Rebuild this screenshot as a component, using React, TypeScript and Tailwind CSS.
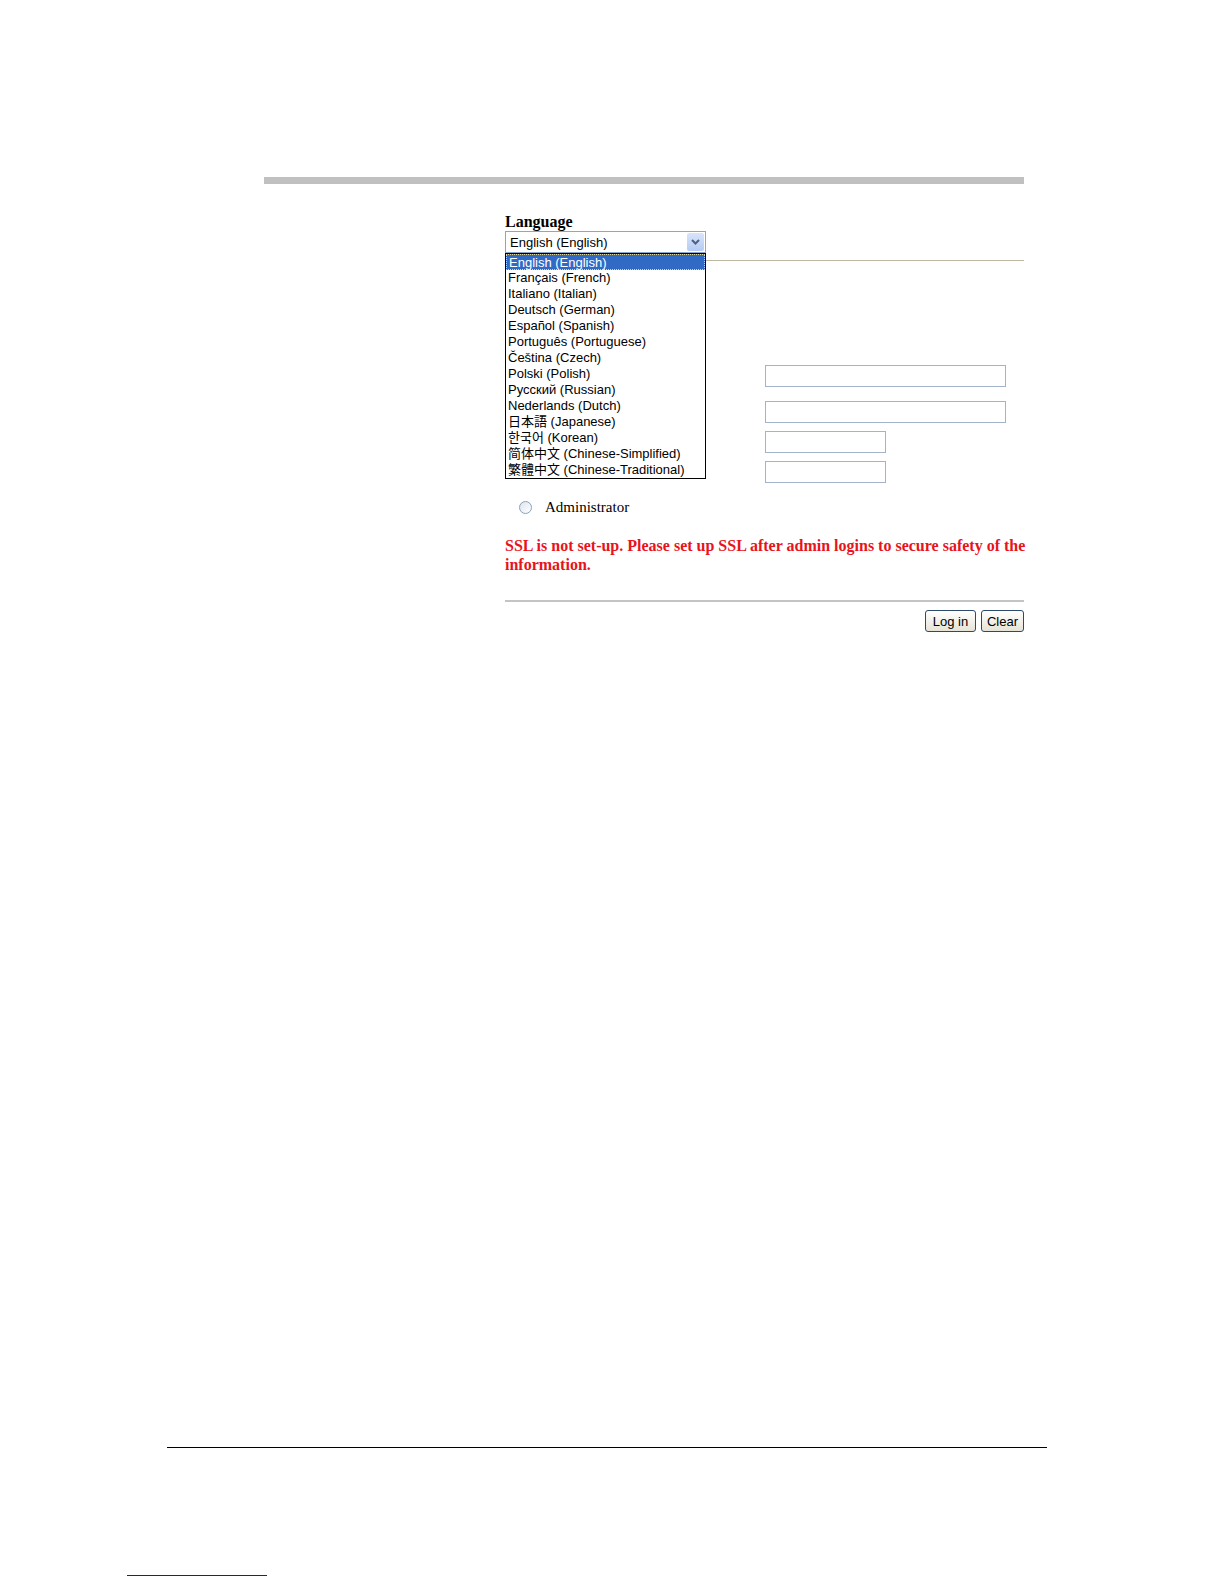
const languages = [
  'English (English)',
  'Français (French)',
  'Italiano (Italian)',
  'Deutsch (German)',
  'Español (Spanish)',
  'Português (Portuguese)',
  'Čeština (Czech)',
  'Polski (Polish)',
  'Русский (Russian)',
  'Nederlands (Dutch)',
  '日本語 (Japanese)',
  '한국어 (Korean)',
  '简体中文 (Chinese-Simplified)',
  '繁體中文 (Chinese-Traditional)',
]

const sans = "font-['Liberation_Sans','Noto_Sans_CJK_JP',sans-serif]"
const serif = "font-['Liberation_Serif',serif]"

function TextBox({ wide }: { wide?: boolean }) {
  return (
    <div
      className={`h-[22px] border border-[#a3b3c9] bg-white ${wide ? 'w-[241px]' : 'w-[121px]'}`}
    />
  )
}

function XpButton({ label, width }: { label: string; width: string }) {
  return (
    <button
      className={`${width} h-[22px] rounded-[3px] border border-[#2c4a6b] bg-gradient-to-b from-white to-[#e6e3d6] text-[13px] leading-none text-black ${sans}`}
    >
      {label}
    </button>
  )
}

export default function App() {
  return (
    <div className="flex h-[1584px] w-[1224px] flex-col bg-white">
      <div className="ml-[264px] mt-[177px] h-[7px] w-[760px] bg-[#c0c0c0]" />

      <div className="relative ml-[505px] mt-[29px] w-[519px]">
        <div className={`${serif} text-[16px] font-bold leading-[18px] text-black`}>
          Language
        </div>

        <div className="flex h-[22px] w-[201px] items-center border border-[#8aa6cf] bg-white">
          <span className={`${sans} flex-1 pl-[4px] text-[13px] leading-none text-black`}>
            English (English)
          </span>
          <div className="mr-[1px] flex h-[18px] w-[17px] items-center justify-center rounded-[2px] bg-gradient-to-b from-[#d8e4fb] to-[#b6cbf4]">
            <svg width="9" height="6" viewBox="0 0 9 6">
              <path d="M1 1 L4.5 4.5 L8 1" fill="none" stroke="#4d6185" strokeWidth="2" />
            </svg>
          </div>
        </div>

        <div className="mt-[7px] h-px w-full bg-[#bdb9a3]" />

        <div className="mt-[104px] flex flex-col">
          <div className="ml-[260px]">
            <TextBox wide />
          </div>
          <div className="ml-[260px] mt-[14px]">
            <TextBox wide />
          </div>
          <div className="ml-[260px] mt-[8px]">
            <TextBox />
          </div>
          <div className="ml-[260px] mt-[8px]">
            <TextBox />
          </div>
        </div>

        <div className="mt-[15px] flex items-center">
          <div className="ml-[14px] h-[13px] w-[13px] rounded-full border border-[#8aa0ba] bg-gradient-to-br from-[#dfe5ee] to-white" />
          <span className={`${serif} ml-[13px] text-[15px] leading-[18px] text-black`}>
            Administrator
          </span>
        </div>

        <p className={`${serif} mt-[20px] w-[530px] text-[16px] font-bold leading-[19px] text-[#e8131b]`}>
          SSL is not set-up. Please set up SSL after admin logins to secure safety of the information.
        </p>

        <div className="mt-[26px] h-[2px] w-full bg-[#c4c4c4]" />

        <div className="mt-[8px] flex justify-end gap-[5px]">
          <XpButton label="Log in" width="w-[51px]" />
          <XpButton label="Clear" width="w-[43px]" />
        </div>

        <ul className="absolute left-0 top-[40px] w-[201px] border border-black bg-white py-0">
          {languages.map((lang, i) => (
            <li
              key={lang}
              className={`${sans} h-[16px] pl-[2px] text-[13px] leading-[16px] ${
                i === 0 ? 'border border-dotted border-[#e0d8a0] bg-[#316ac5] pl-[1px] leading-[14px] text-white' : 'text-black'
              }`}
            >
              {lang}
            </li>
          ))}
        </ul>
      </div>

      <div className="ml-[167px] mt-auto h-px w-[880px] bg-black" />
      <div className="mb-[8px] ml-[127px] mt-[127px] h-px w-[140px] bg-[#1c1c8c]" />
    </div>
  )
}
